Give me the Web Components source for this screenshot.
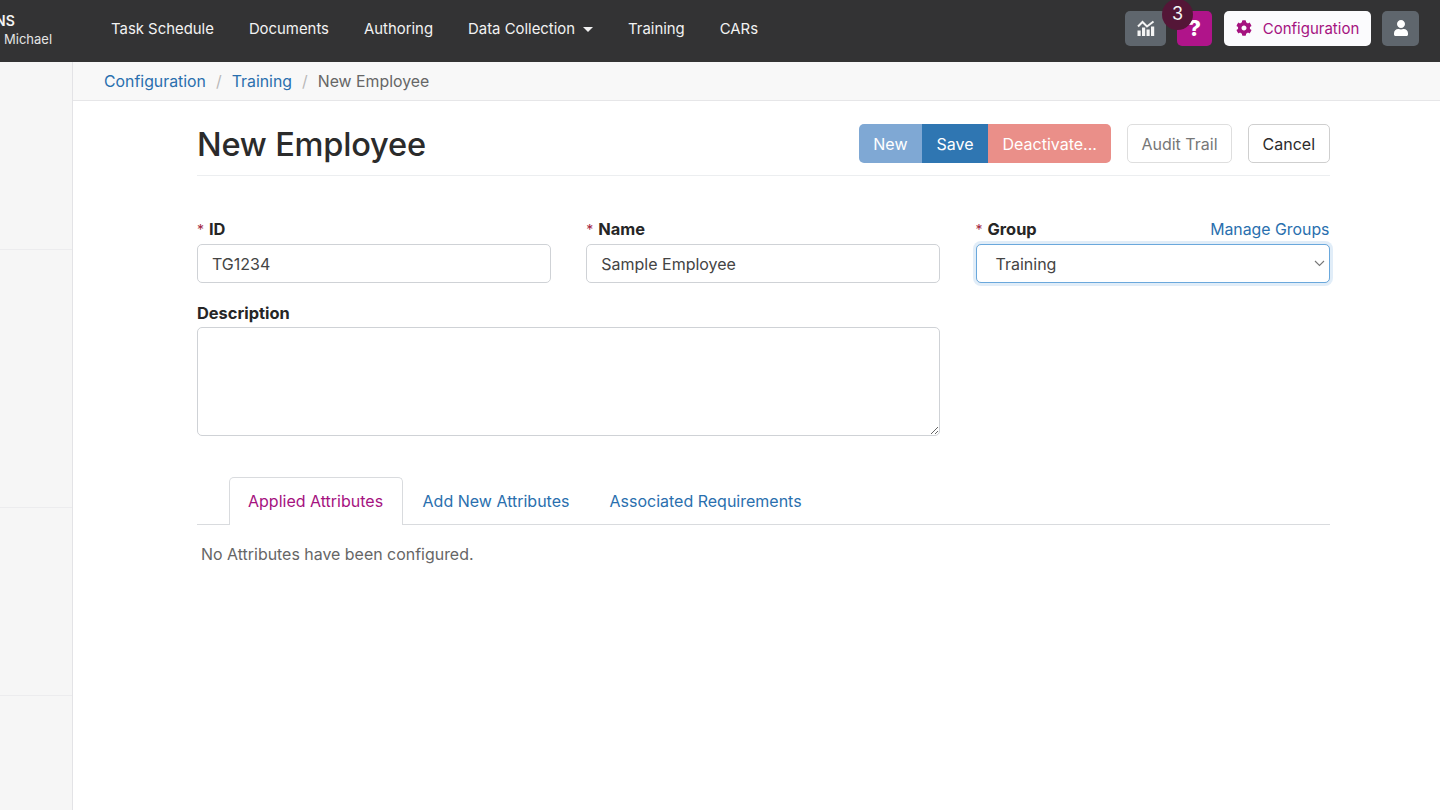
<!DOCTYPE html>
<html lang="en">
<head>
<meta charset="UTF-8">
<title>New Employee</title>
<style>
  html, body { margin: 0; height: 100%; overflow: hidden; background: #fff; }
  body { font: 16px/24px Inter, "Liberation Sans", sans-serif; color: #333; }
</style>
</head>
<body>
<template id="t-app">
  <style>
    :host { display: flex; flex-direction: column; height: 810px; }
    .body { flex: 1; display: flex; min-height: 0; }
    .main { flex: 1; display: flex; flex-direction: column; min-width: 0; }
    .page { padding: 23px 110px 0 124px; }
  </style>
  <slot name="top"></slot>
  <div class="body">
    <slot name="side"></slot>
    <div class="main">
      <slot name="crumbs"></slot>
      <div class="page"><slot></slot></div>
    </div>
  </div>
</template>

<template id="t-topbar">
  <style>
    :host { display: flex; align-items: center; height: 62px; box-sizing: border-box; background: #333334; color: #f4f4f4; padding: 0 21px 6px 0; flex: none; }
    .brand { width: 111px; flex: none; overflow: hidden; align-self: stretch; margin-bottom: -6px; display: flex; flex-direction: column; justify-content: center; padding-bottom: 2px; box-sizing: border-box; }
    .brand b { font-size: 14px; line-height: 18px; font-weight: 600; margin-left: -5px; }
    .brand span { font-size: 13px; line-height: 18px; margin-left: 4px; color: #e4e4e4; }
    nav { display: flex; gap: 35px; flex: 1; margin-top: 2px; }
    .right { display: flex; align-items: center; position: relative; }
  </style>
  <div class="brand"><b>NS</b><span>Michael</span></div>
  <nav><slot name="nav"></slot></nav>
  <div class="right"><slot></slot></div>
</template>

<template id="t-navlink">
  <style>
    :host { display: inline-flex; align-items: center; gap: 8px; font-size: 14.9px; color: #f2f2f2; white-space: nowrap; }
    .caret { display: none; width: 0; height: 0; border: 5px solid transparent; border-top-color: #f2f2f2; border-bottom: 0; }
    :host([caret]) .caret { display: block; }
  </style>
  <slot></slot><span class="caret"></span>
</template>

<template id="t-iconbtn">
  <style>
    :host { display: inline-flex; align-items: center; justify-content: center; height: 35px; border-radius: 5px; box-sizing: border-box; background: #5f666d; color: #fff; position: relative; }
    :host([tone=help]) { background: #b0148a; font-weight: 800; font-size: 22px; }
    :host([tone=light]) { background: #fbfbfd; color: #a5127f; font-size: 15px; gap: 11px; padding-top: 2px; }
    ::slotted(svg.up) { margin-top: -2px; }
  </style>
  <slot></slot>
</template>

<template id="t-badge">
  <style>
    :host { position: absolute; left: 37px; top: -12px; width: 31px; height: 31px; border-radius: 50%; background: #541637; color: #f5f5f5; font-size: 18px; line-height: 30px; text-align: center; z-index: 2; }
  </style>
  <slot></slot>
</template>

<template id="t-sidenav">
  <style>
    :host { display: flex; flex-direction: column; width: 72px; flex: none; background: #f6f6f6; border-right: 1px solid #e3e3e6; }
    i { display: block; box-sizing: border-box; border-bottom: 1px solid #ececee; }
    i:nth-of-type(1) { height: 188px; }
    i:nth-of-type(2) { height: 258px; }
    i:nth-of-type(3) { height: 188px; }
  </style>
  <i></i><i></i><i></i>
</template>

<template id="t-crumbs">
  <style>
    :host { display: flex; align-items: center; gap: 10px; height: 39px; box-sizing: border-box; padding: 1px 0 0 31px; background: #f8f8f8; border-bottom: 1px solid #e6e6e8; font-size: 15.85px; color: #666; flex: none; }
    ::slotted(a) { color: #2a6fae; text-decoration: none; }
    ::slotted(s) { color: #b9b9b9; text-decoration: none; }
  </style>
  <slot></slot>
</template>

<template id="t-pagehead">
  <style>
    :host { display: flex; align-items: flex-start; justify-content: space-between; height: 51px; border-bottom: 1px solid #eceef0; }
    h1 { margin: 0; font-size: 32.6px; line-height: 41px; font-weight: 500; color: #2b2b2b; letter-spacing: -0.2px; }
    .tools { display: flex; gap: 16px; }
  </style>
  <h1><slot name="title"></slot></h1>
  <div class="tools"><slot></slot></div>
</template>

<template id="t-btngroup">
  <style>
    :host { display: flex; border-radius: 5px; overflow: hidden; }
  </style>
  <slot></slot>
</template>

<template id="t-btn">
  <style>
    :host { display: inline-flex; align-items: center; height: 39px; box-sizing: border-box; padding: 0 14.5px; font-size: 16px; white-space: nowrap; color: #fff; }
    :host([kind=new]) { background: #7fa8d4; }
    :host([kind=save]) { background: #2f76b2; }
    :host([kind=deact]) { background: #ea8f89; padding: 0 14.5px; }
    :host([kind=audit]) { background: #fff; color: #777; border: 1px solid #dedede; border-radius: 5px; padding: 0 13px; }
    :host([kind=cancel]) { background: #fff; color: #2b2b2b; border: 1px solid #cfcfcf; border-radius: 5px; padding: 0 14px; }
  </style>
  <slot></slot>
</template>

<template id="t-form">
  <style>
    :host { display: grid; grid-template-columns: repeat(3, 354px); column-gap: 35.25px; row-gap: 18px; margin-top: 41px; }
  </style>
  <slot></slot>
</template>

<template id="t-field">
  <style>
    :host { display: block; }
    .head { display: flex; justify-content: space-between; height: 24px; margin-bottom: 3px; }
    label { font-weight: 700; color: #262626; font-size: 16.4px; }
    .req { display: none; color: #a3283f; font-weight: 400; font-size: 14px; margin-right: 5px; }
    :host([required]) .req { display: inline; }
    .box { display: flex; align-items: center; height: 39px; box-sizing: border-box; padding: 0 14px; border: 1px solid #cfd2d6; border-radius: 5px; font-size: 16px; color: #444; background: #fff; }
    ::slotted(a) { color: #2a6fae; text-decoration: none; font-size: 15.85px; line-height: 26px; }
  </style>
  <div class="head"><label><span class="req">*</span><span id="lab"></span></label><slot name="extra"></slot></div>
  <div class="box"><slot></slot></div>
</template>

<template id="t-select">
  <style>
    :host { display: flex; align-items: center; justify-content: space-between; height: 39px; margin: -1px -15px; width: calc(100% + 30px); box-sizing: border-box; padding: 0 4px 0 19px; border: 1px solid #6aa8dc; border-radius: 5px; box-shadow: 0 0 0 3px rgba(120, 175, 225, .22); background: #fff; color: #444; }
  </style>
  <slot></slot>
  <svg width="11" height="7" viewBox="0 0 11 7" fill="none" stroke="#777" stroke-width="1.1"><path d="M1 1l4.500 4.500L10 1"/></svg>
</template>

<template id="t-area">
  <style>
    :host { display: block; }
    label { display: block; height: 24px; margin-bottom: 2px; font-weight: 700; font-size: 16.4px; color: #262626; }
    textarea { display: block; width: 100%; height: 109px; box-sizing: border-box; border: 1px solid #cfd2d6; border-radius: 5px; background: #fff; margin: 0; outline: 0; font: inherit; }
  </style>
  <label><slot></slot></label>
  <textarea></textarea>
</template>

<template id="t-tabs">
  <style>
    :host { display: flex; margin-top: 41px; padding-left: 32px; height: 47px; border-bottom: 1px solid #d9dbde; }
  </style>
  <slot></slot>
</template>

<template id="t-tab">
  <style>
    :host { display: flex; align-items: center; height: 48px; box-sizing: border-box; padding: 0 19px 2px; border: 1px solid transparent; border-bottom: 0; border-radius: 5px 5px 0 0; color: #2a6fae; font-size: 16px; white-space: nowrap; }
    :host([active]) { background: #fff; border-color: #d9dbde; color: #a5127f; padding: 0 18.5px 2px 18px; }
  </style>
  <slot></slot>
</template>

<template id="t-note">
  <style>
    :host { display: block; margin: 18px 0 0 4px; color: #666; font-size: 15.95px; }
  </style>
  <slot></slot>
</template>

<x-app>
  <x-topbar slot="top">
    <x-navlink slot="nav">Task Schedule</x-navlink>
    <x-navlink slot="nav">Documents</x-navlink>
    <x-navlink slot="nav">Authoring</x-navlink>
    <x-navlink slot="nav" caret>Data Collection</x-navlink>
    <x-navlink slot="nav">Training</x-navlink>
    <x-navlink slot="nav">CARs</x-navlink>

    <x-iconbtn style="width:41px">
      <svg width="18" height="16" viewBox="0 0 18 16" fill="#f4f4f4">
        <path d="M1 6.500L5.500 2l4.500 4.500L16.500 1.500" fill="none" stroke="#f4f4f4" stroke-width="2"/>
        <rect x="0.500" y="10.500" width="3.200" height="5.500"/><rect x="5" y="7.500" width="3.200" height="8.500"/><rect x="9.500" y="9.500" width="3.200" height="6.500"/><rect x="14" y="6.500" width="3.200" height="9.500"/>
      </svg>
    </x-iconbtn>
    <x-iconbtn tone="help" style="width:35px;margin-left:11px">?</x-iconbtn>
    <x-badge>3</x-badge>
    <x-iconbtn tone="light" style="width:147px;margin-left:12px">
      <svg class="up" width="16" height="16" viewBox="0 0 512 512" fill="#a5127f"><path d="M487.400 315.700l-42.600-24.600c4.300-23.200 4.300-47 0-70.200l42.600-24.600c4.900-2.800 7.100-8.600 5.500-14-11.100-35.600-30-67.800-54.700-94.600-3.800-4.100-10-5.100-14.800-2.300L380.800 110c-17.900-15.400-38.500-27.300-60.800-35.100V25.800c0-5.600-3.900-10.500-9.400-11.700-36.700-8.200-74.300-7.800-109.200 0-5.500 1.200-9.400 6.100-9.400 11.700V75c-22.200 7.900-42.800 19.800-60.800 35.100L88.700 85.500c-4.900-2.800-11-1.900-14.800 2.300-24.700 26.700-43.600 58.900-54.700 94.600-1.700 5.400.6 11.200 5.500 14L67.300 221c-4.300 23.200-4.300 47 0 70.200l-42.600 24.600c-4.900 2.800-7.100 8.600-5.500 14 11.100 35.600 30 67.800 54.700 94.600 3.800 4.100 10 5.100 14.800 2.300l42.600-24.600c17.900 15.400 38.500 27.300 60.800 35.100v49.200c0 5.600 3.900 10.500 9.400 11.700 36.700 8.200 74.300 7.800 109.200 0 5.500-1.200 9.400-6.100 9.400-11.700v-49.200c22.200-7.900 42.800-19.800 60.800-35.100l42.600 24.600c4.900 2.800 11 1.900 14.800-2.300 24.700-26.700 43.600-58.900 54.700-94.600 1.500-5.500-.7-11.300-5.600-14.100zM256 336c-44.100 0-80-35.900-80-80s35.900-80 80-80 80 35.900 80 80-35.900 80-80 80z"/></svg>
      Configuration
    </x-iconbtn>
    <x-iconbtn style="width:37px;margin-left:11px">
      <svg width="14" height="16" viewBox="0 0 448 512" fill="#fff"><path d="M224 256c70.700 0 128-57.300 128-128S294.700 0 224 0 96 57.300 96 128s57.300 128 128 128zm89.600 32h-16.700c-22.200 10.200-46.900 16-72.900 16s-50.600-5.800-72.900-16h-16.700C60.200 288 0 348.200 0 422.400V464c0 26.500 21.500 48 48 48h352c26.500 0 48-21.500 48-48v-41.600c0-74.200-60.200-134.400-134.400-134.400z"/></svg>
    </x-iconbtn>
  </x-topbar>

  <x-sidenav slot="side"></x-sidenav>

  <x-crumbs slot="crumbs">
    <a href="#">Configuration</a><s>/</s><a href="#">Training</a><s>/</s><span>New Employee</span>
  </x-crumbs>

  <x-pagehead>
    <span slot="title">New Employee</span>
    <x-btngroup>
      <x-btn kind="new">New</x-btn>
      <x-btn kind="save">Save</x-btn>
      <x-btn kind="deact">Deactivate...</x-btn>
    </x-btngroup>
    <x-btn kind="audit">Audit Trail</x-btn>
    <x-btn kind="cancel">Cancel</x-btn>
  </x-pagehead>

  <x-form>
    <x-field label="ID" required>TG1234</x-field>
    <x-field label="Name" required>Sample Employee</x-field>
    <x-field label="Group" required>
      <a slot="extra" href="#">Manage Groups</a>
      <x-select>Training</x-select>
    </x-field>
    <x-area style="grid-column: span 2">Description</x-area>
  </x-form>

  <x-tabs>
    <x-tab active>Applied Attributes</x-tab>
    <x-tab>Add New Attributes</x-tab>
    <x-tab>Associated Requirements</x-tab>
  </x-tabs>
  <x-note>No Attributes have been configured.</x-note>
</x-app>

<script>
  'use strict'
  // every element is the same thing: clone its template into an open shadow root
  function define(name, setup) {
    customElements.define('x-' + name, class extends HTMLElement {
      constructor() {
        super()
        const shadow = this.attachShadow({ mode: 'open' })
        shadow.appendChild(document.getElementById('t-' + name).content.cloneNode(true))
      }
      connectedCallback() {
        if (setup) setup(this, this.shadowRoot)
      }
    })
  }

  ;['app', 'topbar', 'navlink', 'iconbtn', 'badge', 'sidenav', 'crumbs', 'pagehead', 'btngroup',
    'btn', 'form', 'select', 'area', 'tabs', 'tab', 'note'].forEach(n => define(n))

  define('field', (el, root) => {
    root.getElementById('lab').textContent = el.getAttribute('label')
  })
</script>
</body>
</html>
